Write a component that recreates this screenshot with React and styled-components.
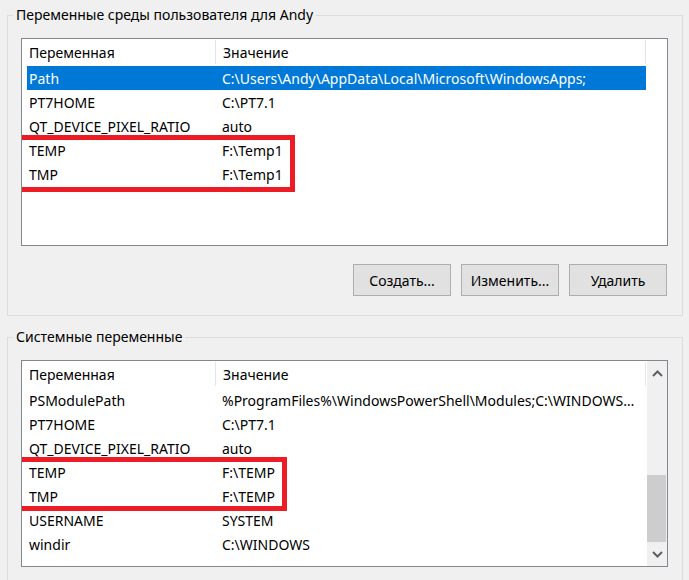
import React from 'react'
import styled, { createGlobalStyle } from 'styled-components'

const Global = createGlobalStyle`
  html, body {
    margin: 0;
    padding: 0;
    background: #f0f0f0;
    font-family: "Noto Sans", "Open Sans", sans-serif;
    font-size: 14px;
    color: #000;
  }
  #root {
    width: 689px;
    height: 580px;
    overflow: hidden;
  }
`

const Page = styled.div`
  padding: 0 6px 0 7px;
`

const Group = styled.fieldset`
  margin: ${p => p.$top}px 0 0 0;
  padding: 0 14px ${p => p.$bottom}px 13px;
  border: 1px solid #dcdcdc;
  min-width: 0;
`

const Legend = styled.legend`
  margin-left: -8px;
  padding: 0 3px;
  line-height: 20px;
  height: 20px;
`

const ListBox = styled.div`
  margin-top: 13px;
  height: ${p => p.$height}px;
  border: 1px solid #828790;
  background: #fff;
  display: flex;
  overflow: hidden;
`

const Table = styled.div`
  width: 624px;
  display: flex;
  flex-direction: column;
`

const Header = styled.div`
  display: flex;
  height: 27px;
  align-items: center;
`

const HeadCell = styled.div`
  width: ${p => p.$w}px;
  height: 24px;
  align-self: flex-start;
  margin-top: 1px;
  display: flex;
  align-items: center;
  padding-left: 7px;
  box-sizing: border-box;
  border-right: 1px solid #e5e5e5;
`

const Row = styled.div`
  display: flex;
  height: 24px;
  align-items: center;
  margin-left: 5px;
  width: 619px;
  background: ${p => (p.$selected ? '#0078d7' : 'transparent')};
  color: ${p => (p.$selected ? '#fff' : '#000')};
`

const Cell = styled.div`
  width: ${p => p.$w}px;
  padding-left: ${p => p.$pad}px;
  box-sizing: border-box;
  white-space: nowrap;
  overflow: hidden;
  text-overflow: ellipsis;
  padding-right: 8px;
`

const Marked = styled.div`
  position: relative;
  &::after {
    content: '';
    position: absolute;
    top: -3px;
    left: ${p => p.$left}px;
    width: ${p => p.$w}px;
    height: ${p => p.$h}px;
    border: 5px solid #ed1c24;
    box-sizing: border-box;
    pointer-events: none;
  }
`

const Buttons = styled.div`
  display: flex;
  justify-content: flex-end;
  gap: 10px;
  margin-top: 18px;
  margin-right: 1px;
`

const Button = styled.button`
  width: 98px;
  height: 32px;
  background: #e1e1e1;
  border: 1px solid #adadad;
  font-family: inherit;
  font-size: 14px;
  color: #000;
  padding: 0;
`

const ScrollBar = styled.div`
  width: 20px;
  margin-left: 1px;
  background: #f0f0f0;
  display: flex;
  flex-direction: column;
  align-items: center;
`

const Arrow = styled.div`
  height: 24px;
  display: flex;
  align-items: center;
  justify-content: center;
`

const Track = styled.div`
  flex: 1;
  width: 100%;
  display: flex;
  flex-direction: column;
  justify-content: flex-end;
`

const Thumb = styled.div`
  height: 67px;
  width: 19px;
  background: #cdcdcd;
`

const Chevron = ({ up }) => (
  <svg width="11" height="7" viewBox="0 0 11 7">
    <path
      d={up ? 'M1 6 L5.5 1.5 L10 6' : 'M1 1 L5.5 5.5 L10 1'}
      fill="none"
      stroke="#606060"
      strokeWidth="2"
    />
  </svg>
)

const userVars = [
  ['Path', 'C:\\Users\\Andy\\AppData\\Local\\Microsoft\\WindowsApps;'],
  ['PT7HOME', 'C:\\PT7.1'],
  ['QT_DEVICE_PIXEL_RATIO', 'auto'],
]
const userTemp = [
  ['TEMP', 'F:\\Temp1'],
  ['TMP', 'F:\\Temp1'],
]

const sysVars = [
  ['PSModulePath', '%ProgramFiles%\\WindowsPowerShell\\Modules;C:\\WINDOWS\\system32\\WindowsPowerShell\\v1.0\\Modules'],
  ['PT7HOME', 'C:\\PT7.1'],
  ['QT_DEVICE_PIXEL_RATIO', 'auto'],
]
const sysTemp = [
  ['TEMP', 'F:\\TEMP'],
  ['TMP', 'F:\\TEMP'],
]
const sysRest = [
  ['USERNAME', 'SYSTEM'],
  ['windir', 'C:\\WINDOWS'],
]

const VarRow = ({ name, value, selected }) => (
  <Row $selected={selected}>
    <Cell $w={188} $pad={2}>{name}</Cell>
    <Cell $w={431} $pad={7}>{value}</Cell>
  </Row>
)

const HeadRow = () => (
  <Header>
    <HeadCell $w={194}>Переменная</HeadCell>
    <HeadCell $w={430}>Значение</HeadCell>
  </Header>
)

const App = () => {
  return (
    <Page>
      <Global />
      <Group $top={5} $bottom={19}>
        <Legend>Переменные среды пользователя для Andy</Legend>
        <ListBox $height={206}>
          <Table>
            <HeadRow />
            {userVars.map(([n, v], i) => (
              <VarRow key={n} name={n} value={v} selected={i === 0} />
            ))}
            <Marked $left={-5} $w={278} $h={57}>
              {userTemp.map(([n, v]) => (
                <VarRow key={n} name={n} value={v} />
              ))}
            </Marked>
          </Table>
        </ListBox>
        <Buttons>
          <Button>Создать...</Button>
          <Button>Изменить...</Button>
          <Button>Удалить</Button>
        </Buttons>
      </Group>
      <Group $top={11} $bottom={40}>
        <Legend>Системные переменные</Legend>
        <ListBox $height={205}>
          <Table>
            <HeadRow />
            {sysVars.map(([n, v]) => (
              <VarRow key={n} name={n} value={v} />
            ))}
            <Marked $left={-8} $w={273} $h={54}>
              {sysTemp.map(([n, v]) => (
                <VarRow key={n} name={n} value={v} />
              ))}
            </Marked>
            {sysRest.map(([n, v]) => (
              <VarRow key={n} name={n} value={v} />
            ))}
          </Table>
          <ScrollBar>
            <Arrow><Chevron up /></Arrow>
            <Track>
              <Thumb />
            </Track>
            <Arrow><Chevron /></Arrow>
          </ScrollBar>
        </ListBox>
      </Group>
    </Page>
  )
}

export default App
